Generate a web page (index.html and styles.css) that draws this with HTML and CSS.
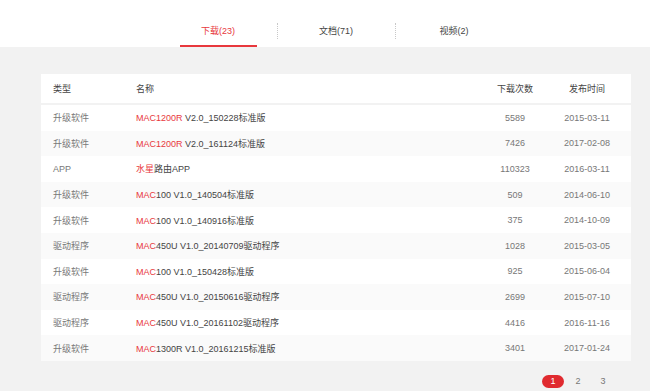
FILE: index.html
```html
<!DOCTYPE html>
<html lang="zh">
<head>
    <meta charset="UTF-8">
    <title>下载中心</title>
    <link rel="stylesheet" href="styles.css">
</head>
<body>
    <div class="tabs">
        <div class="tab active">下载(23)</div>
        <div class="tab">文档(71)</div>
        <div class="tab">视频(2)</div>
    </div>

    <div class="content">
        <div class="card">
            <table class="list">
                <colgroup>
                    <col class="col-type">
                    <col class="col-name">
                    <col class="col-count">
                    <col class="col-date">
                </colgroup>
                <thead>
                    <tr>
                        <th>类型</th>
                        <th>名称</th>
                        <th class="center">下载次数</th>
                        <th class="center">发布时间</th>
                    </tr>
                </thead>
                <tbody>
                    <tr><td>升级软件</td><td class="name"><span class="hl">MAC1200R</span> V2.0_150228标准版</td><td class="center">5589</td><td class="center">2015-03-11</td></tr>
                    <tr><td>升级软件</td><td class="name"><span class="hl">MAC1200R</span> V2.0_161124标准版</td><td class="center">7426</td><td class="center">2017-02-08</td></tr>
                    <tr><td>APP</td><td class="name"><span class="hl">水星</span>路由APP</td><td class="center">110323</td><td class="center">2016-03-11</td></tr>
                    <tr><td>升级软件</td><td class="name"><span class="hl">MAC</span>100 V1.0_140504标准版</td><td class="center">509</td><td class="center">2014-06-10</td></tr>
                    <tr><td>升级软件</td><td class="name"><span class="hl">MAC</span>100 V1.0_140916标准版</td><td class="center">375</td><td class="center">2014-10-09</td></tr>
                    <tr><td>驱动程序</td><td class="name"><span class="hl">MAC</span>450U V1.0_20140709驱动程序</td><td class="center">1028</td><td class="center">2015-03-05</td></tr>
                    <tr><td>升级软件</td><td class="name"><span class="hl">MAC</span>100 V1.0_150428标准版</td><td class="center">925</td><td class="center">2015-06-04</td></tr>
                    <tr><td>驱动程序</td><td class="name"><span class="hl">MAC</span>450U V1.0_20150616驱动程序</td><td class="center">2699</td><td class="center">2015-07-10</td></tr>
                    <tr><td>驱动程序</td><td class="name"><span class="hl">MAC</span>450U V1.0_20161102驱动程序</td><td class="center">4416</td><td class="center">2016-11-16</td></tr>
                    <tr><td>升级软件</td><td class="name"><span class="hl">MAC</span>1300R V1.0_20161215标准版</td><td class="center">3401</td><td class="center">2017-01-24</td></tr>
                </tbody>
            </table>
        </div>

        <div class="pager">
            <span class="page current">1</span>
            <span class="page">2</span>
            <span class="page">3</span>
        </div>
    </div>
</body>
</html>
```

FILE: styles.css
```css
body {
    margin: 0;
    background-color: #f2f2f2;
    font-family: "Liberation Sans", "Noto Sans CJK SC", sans-serif;
    font-size: 9px;
    color: #777;
}
.tabs {
    display: flex;
    justify-content: center;
    height: 47px;
    padding-left: 22px;
    background-color: white;
}
.tab {
    position: relative;
    width: 118px;
    padding-top: 22px;
    line-height: 18px;
    text-align: center;
    color: #444;
}
.tab + .tab::before {
    content: "";
    position: absolute;
    left: 0;
    top: 23px;
    height: 16px;
    border-left: 1px dotted #c8c8c8;
}
.tab.active {
    color: #e8383d;
}
.tab.active::after {
    content: "";
    position: absolute;
    left: 21px;
    right: 20px;
    bottom: 0;
    height: 2px;
    background-color: #e8383d;
}
.content {
    padding: 27px 19px 0 41px;
}
.card {
    background-color: white;
}
.list {
    width: 100%;
    border-collapse: collapse;
    table-layout: fixed;
}
.col-type { width: 95px; }
.col-count { width: 80px; }
.col-date { width: 76px; }
.list th {
    height: 29px;
    font-weight: normal;
    text-align: left;
    color: #444;
    border-bottom: 2px solid #f2f2f2;
}
.list td {
    height: 25.6px;
}
.list th,
.list td {
    padding: 0;
    white-space: nowrap;
}
.list th:first-child,
.list td:first-child {
    padding-left: 12px;
}
.list th:last-child,
.list td:last-child {
    padding-right: 12px;
}
.list tbody tr:nth-child(even) {
    background-color: #fafafa;
}
.list .center {
    text-align: center;
}
.list .name {
    color: #444;
}
.hl {
    color: #e8383d;
}
.pager {
    display: flex;
    justify-content: flex-end;
    gap: 3px;
    margin-top: 14px;
    padding-right: 17px;
}
.page {
    width: 22px;
    height: 13px;
    line-height: 13px;
    text-align: center;
    border-radius: 7px;
}
.page.current {
    background-color: #e02a2f;
    color: white;
}
```
